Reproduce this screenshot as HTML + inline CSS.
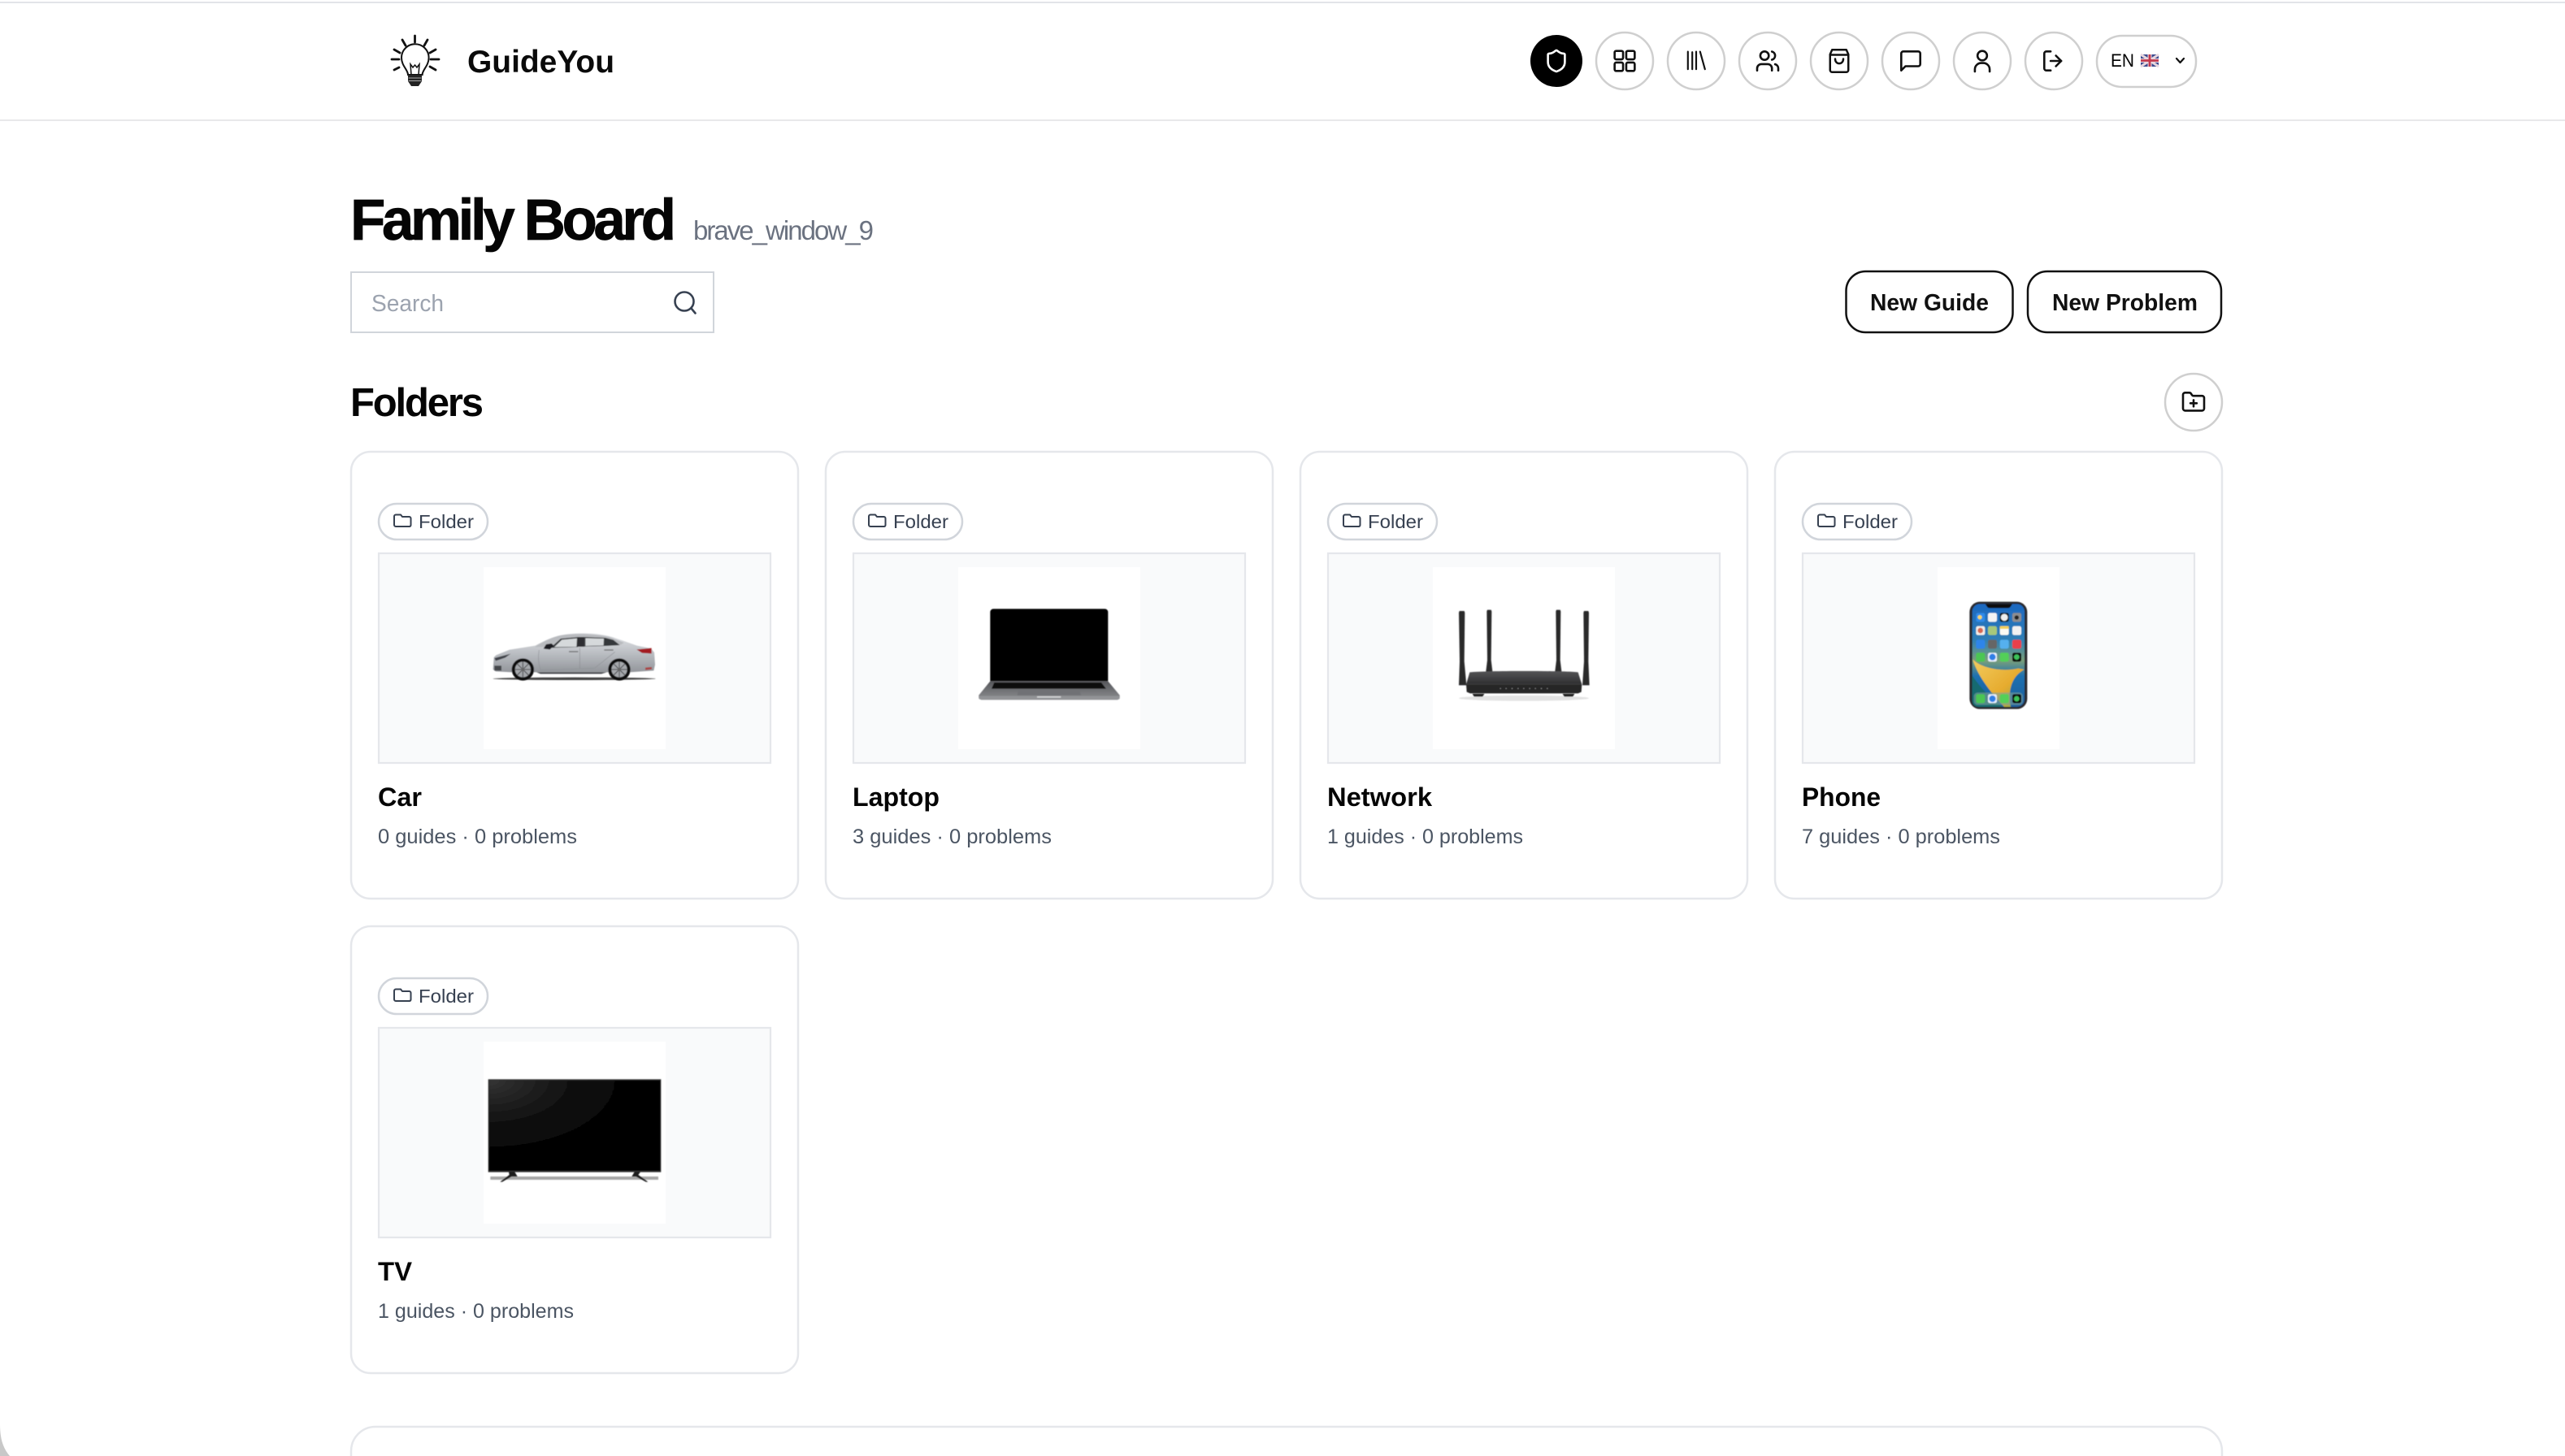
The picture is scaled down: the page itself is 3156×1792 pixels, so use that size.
<!DOCTYPE html>
<html lang="en">
<head>
<meta charset="utf-8">
<title>GuideYou - Family Board</title>
<style>
html,body{margin:0;padding:0;background:#fff;width:3156px;height:1792px;overflow:hidden}
svg{display:block;font-family:"Liberation Sans",sans-serif}
.b{font-weight:700}
.ic{fill:none;stroke:#111;stroke-width:2;stroke-linecap:round;stroke-linejoin:round}
.ring{fill:#fff;stroke:#cfcfcf;stroke-width:2.5}
.card{fill:#fff;stroke:#e5e7eb;stroke-width:2.5}
.chip{fill:#fff;stroke:#d1d5db;stroke-width:2.5}
.box{fill:#f9fafb;stroke:#e5e7eb;stroke-width:2.2}
.ct{font-size:32px;font-weight:700;fill:#050505}
.cs{font-size:25px;fill:#4b5563}
.cf{font-size:23px;fill:#374151}
.fi{fill:none;stroke:#374151;stroke-width:2;stroke-linecap:round;stroke-linejoin:round}
</style>
</head>
<body>
<svg width="3156" height="1792" viewBox="0 0 3156 1792" xmlns="http://www.w3.org/2000/svg">
<defs>
<filter id="s" x="-5%" y="-5%" width="110%" height="110%"><feGaussianBlur stdDeviation="1.2"/></filter>
<linearGradient id="carb" x1="0" y1="0" x2="0" y2="1"><stop offset="0" stop-color="#e2e4e7"/><stop offset=".5" stop-color="#bcbfc4"/><stop offset="1" stop-color="#93969b"/></linearGradient>
<radialGradient id="tvg" cx="0" cy="0" r=".9"><stop offset="0" stop-color="#343434"/><stop offset=".5" stop-color="#121212"/><stop offset="1" stop-color="#000"/></radialGradient>
<linearGradient id="rtop" x1="0" y1="0" x2="0" y2="1"><stop offset="0" stop-color="#555557"/><stop offset="1" stop-color="#2e2e30"/></linearGradient>
<linearGradient id="lapb" x1="0" y1="0" x2="0" y2="1"><stop offset="0" stop-color="#55565a"/><stop offset="1" stop-color="#8c8d90"/></linearGradient>
<linearGradient id="wall" x1="0" y1="0" x2="0" y2="1"><stop offset="0" stop-color="#1c68c0"/><stop offset=".35" stop-color="#2f7fb5"/><stop offset=".55" stop-color="#7a9f7a"/><stop offset=".7" stop-color="#1d70b0"/><stop offset="1" stop-color="#1b5e9c"/></linearGradient>
<linearGradient id="sw" x1="0" y1="0" x2="1" y2="1"><stop offset="0" stop-color="#f2cb5e"/><stop offset=".6" stop-color="#e6ab2e"/><stop offset="1" stop-color="#7fa750"/></linearGradient>
</defs>

<rect width="3156" height="1792" fill="#fff"/>
<rect x="0" y="2" width="3156" height="2" fill="#e2e4e8"/>
<rect x="0" y="147" width="3156" height="2" fill="#e8e8ea"/>

<!-- logo -->
<g fill="none" stroke="#111" stroke-linecap="round">
<path d="M510.500 44v8M495 49l4 7M526 49l-4 7M485 61l7 4M536 61l-7 4M482 73h9M530 73h10M485 86l6-3M536 86l-7-4" stroke-width="2.800"/>
<path d="M502 92c0-6-8-11-8-21a16.800 16.800 0 0 1 33.600 0c0 10-8 15-8 21z" stroke-width="2"/>
<path d="M506 92l-1-13 3 4 2.500-3 2.500 3 3-4-1 13" stroke-width="1.500"/>
<path d="M502 92h17v8l-4 6h-9l-4-6z" fill="#222" stroke="none"/>
<path d="M503 96h15M503 99.500h15" stroke="#aaa" stroke-width="1"/>
</g>
<text x="575" y="89" class="b" font-size="39" fill="#0a0a0a" textLength="181" lengthAdjust="spacingAndGlyphs">GuideYou</text>

<!-- nav -->
<circle cx="1915" cy="75" r="32" fill="#000"/>
<g transform="translate(1915 75) scale(1.3) translate(-12 -12)"><path class="ic" style="stroke:#fff" d="M20 13c0 5-3.500 7.500-7.660 8.950a1 1 0 0 1-.67-.01C7.500 20.500 4 18 4 13V6a1 1 0 0 1 1-1c2 0 4.500-1.200 6.240-2.720a1.170 1.170 0 0 1 1.520 0C14.510 3.810 17 5 19 5a1 1 0 0 1 1 1z"/></g>

<circle class="ring" cx="1999" cy="75" r="35"/>
<g transform="translate(1999 75) scale(1.3) translate(-12 -12)" class="ic"><rect x="2.500" y="2.500" width="8" height="8" rx="1.500"/><rect x="13.500" y="2.500" width="8" height="8" rx="1.500"/><rect x="2.500" y="13.500" width="8" height="8" rx="1.500"/><rect x="13.500" y="13.500" width="8" height="8" rx="1.500"/></g>

<circle class="ring" cx="2087" cy="75" r="35"/>
<g transform="translate(2087 75) scale(1.2) translate(-12 -12)" class="ic"><path d="m16 2.500 5 18M12 2.500v18M8 3v17.500M3.500 2.500v18" stroke-width="1.800"/></g>

<circle class="ring" cx="2175" cy="75" r="35"/>
<g transform="translate(2175 75) scale(1.3) translate(-12 -12)" class="ic"><path d="M16 21v-2a4 4 0 0 0-4-4H6a4 4 0 0 0-4 4v2"/><circle cx="9" cy="7" r="4"/><path d="M22 21v-2a4 4 0 0 0-3-3.870"/><path d="M16 3.130a4 4 0 0 1 0 7.750"/></g>

<circle class="ring" cx="2263" cy="75" r="35"/>
<g transform="translate(2263 75) scale(1.25) translate(-12 -12)" class="ic"><path d="M3 5.500l2-4.500h14l2 4.500V21a2 2 0 0 1-2 2H5a2 2 0 0 1-2-2z"/><path d="M3 6h18M8 10c0 6 8 6 8 0"/></g>

<circle class="ring" cx="2351" cy="75" r="35"/>
<g transform="translate(2351 75) scale(1.3) translate(-12 -12)" class="ic"><path d="M21 15a2 2 0 0 1-2 2H7l-4 4V5a2 2 0 0 1 2-2h14a2 2 0 0 1 2 2z"/></g>

<circle class="ring" cx="2439" cy="75" r="35"/>
<g transform="translate(2439 75) scale(1.3) translate(-12 -12)" class="ic"><circle cx="12" cy="7" r="4.500"/><path d="M5 22v-2a6 6 0 0 1 6-6h2a6 6 0 0 1 6 6v2"/></g>

<circle class="ring" cx="2527" cy="75" r="35"/>
<g transform="translate(2527 75) scale(1.3) translate(-12 -12)" class="ic"><path d="M9 21H5a2 2 0 0 1-2-2V5a2 2 0 0 1 2-2h4"/><path d="m14 17 5-5-5-5"/><path d="M19 12H9"/></g>

<rect class="ring" x="2580" y="44" width="122" height="63" rx="31"/>
<text x="2597" y="82" font-size="22" fill="#000" textLength="29" lengthAdjust="spacingAndGlyphs">EN</text>
<g>
<rect x="2634" y="67" width="22" height="15" rx="1.500" fill="#3b4a8f"/>
<path d="M2634 67l22 15M2656 67l-22 15" stroke="#e8d6de" stroke-width="3"/>
<path d="M2645 67v15M2634 74.500h22" stroke="#e8d6de" stroke-width="5"/>
<path d="M2645 67v15M2634 74.500h22" stroke="#c23a4f" stroke-width="2.800"/>
</g>
<path d="M2678 72l4.500 5 4.500-5" fill="none" stroke="#111" stroke-width="2.200" stroke-linecap="round" stroke-linejoin="round"/>

<!-- heading -->
<text x="431" y="295" class="b" font-size="71" fill="#050505" stroke="#050505" stroke-width=".7" textLength="401" lengthAdjust="spacing">Family Board</text>
<text x="853" y="295" font-size="33" fill="#6b7280" textLength="222" lengthAdjust="spacing">brave_window_9</text>

<!-- search -->
<rect x="432" y="335" width="446" height="74" fill="#fff" stroke="#d1d5db" stroke-width="2"/>
<text x="457" y="383" font-size="29" fill="#9ca3af" textLength="89" lengthAdjust="spacingAndGlyphs">Search</text>
<g fill="none" stroke="#374151" stroke-width="2.600" stroke-linecap="round"><circle cx="842" cy="371" r="11.500"/><path d="M850.500 379.500l5 6"/></g>

<!-- buttons -->
<rect x="2271.500" y="334" width="205" height="75" rx="24" fill="#fff" stroke="#111" stroke-width="2.500"/>
<text x="2301" y="382" class="b" font-size="29" fill="#111" textLength="146" lengthAdjust="spacingAndGlyphs">New Guide</text>
<rect x="2495" y="334" width="238" height="75" rx="24" fill="#fff" stroke="#111" stroke-width="2.500"/>
<text x="2525" y="382" class="b" font-size="29" fill="#111" textLength="179" lengthAdjust="spacingAndGlyphs">New Problem</text>

<text x="431" y="512" class="b" font-size="49" fill="#050505" textLength="164" lengthAdjust="spacing">Folders</text>
<circle class="ring" cx="2699" cy="495" r="35"/>
<g transform="translate(2699 495) scale(1.3) translate(-12 -12)" class="ic"><path d="M12 10v6"/><path d="M9 13h6"/><path d="M20 20a2 2 0 0 0 2-2V8a2 2 0 0 0-2-2h-7.900a2 2 0 0 1-1.690-.9L9.600 3.900A2 2 0 0 0 7.930 3H4a2 2 0 0 0-2 2v13a2 2 0 0 0 2 2Z"/></g>

<!-- cards row 1 -->
<rect class="card" x="432" y="556" width="550" height="550" rx="24"/>
<rect class="card" x="1016" y="556" width="550" height="550" rx="24"/>
<rect class="card" x="1600" y="556" width="550" height="550" rx="24"/>
<rect class="card" x="2184" y="556" width="550" height="550" rx="24"/>
<!-- cards row 2 -->
<rect class="card" x="432" y="1140" width="550" height="550" rx="24"/>
<!-- bottom card -->
<rect class="card" x="432" y="1756" width="2302" height="120" rx="30"/>

<!-- chips -->
<g>
<rect class="chip" x="466" y="620" width="134" height="44" rx="22"/>
<path class="fi" transform="translate(-1 1)" d="M505 647a2 2 0 0 0 1.500-2v-8a2 2 0 0 0-2-2h-8.500l-2-2.500h-6a2 2 0 0 0-2 2v10.500a2 2 0 0 0 2 2z"/>
<text x="515" y="650" class="cf" textLength="68" lengthAdjust="spacingAndGlyphs">Folder</text>

<rect class="chip" x="1050" y="620" width="134" height="44" rx="22"/>
<path class="fi" transform="translate(-1 1)" d="M1089 647a2 2 0 0 0 1.500-2v-8a2 2 0 0 0-2-2h-8.500l-2-2.500h-6a2 2 0 0 0-2 2v10.500a2 2 0 0 0 2 2z"/>
<text x="1099" y="650" class="cf" textLength="68" lengthAdjust="spacingAndGlyphs">Folder</text>

<rect class="chip" x="1634" y="620" width="134" height="44" rx="22"/>
<path class="fi" transform="translate(-1 1)" d="M1673 647a2 2 0 0 0 1.500-2v-8a2 2 0 0 0-2-2h-8.500l-2-2.500h-6a2 2 0 0 0-2 2v10.500a2 2 0 0 0 2 2z"/>
<text x="1683" y="650" class="cf" textLength="68" lengthAdjust="spacingAndGlyphs">Folder</text>

<rect class="chip" x="2218" y="620" width="134" height="44" rx="22"/>
<path class="fi" transform="translate(-1 1)" d="M2257 647a2 2 0 0 0 1.500-2v-8a2 2 0 0 0-2-2h-8.500l-2-2.500h-6a2 2 0 0 0-2 2v10.500a2 2 0 0 0 2 2z"/>
<text x="2267" y="650" class="cf" textLength="68" lengthAdjust="spacingAndGlyphs">Folder</text>

<rect class="chip" x="466" y="1204" width="134" height="44" rx="22"/>
<path class="fi" transform="translate(-1 1)" d="M505 1231a2 2 0 0 0 1.500-2v-8a2 2 0 0 0-2-2h-8.500l-2-2.500h-6a2 2 0 0 0-2 2v10.500a2 2 0 0 0 2 2z"/>
<text x="515" y="1234" class="cf" textLength="68" lengthAdjust="spacingAndGlyphs">Folder</text>
</g>

<!-- image boxes -->
<rect class="box" x="466" y="681" width="482" height="258"/>
<rect class="box" x="1050" y="681" width="482" height="258"/>
<rect class="box" x="1634" y="681" width="482" height="258"/>
<rect class="box" x="2218" y="681" width="482" height="258"/>
<rect class="box" x="466" y="1265" width="482" height="258"/>

<rect x="595" y="698" width="224" height="224" fill="#fff"/>
<rect x="1179" y="698" width="224" height="224" fill="#fff"/>
<rect x="1763" y="698" width="224" height="224" fill="#fff"/>
<rect x="2384" y="698" width="150" height="224" fill="#fff"/>
<rect x="595" y="1282" width="224" height="224" fill="#fff"/>

<!-- car -->
<g transform="translate(590 750) scale(.33333)">
<g filter="url(#s)">
<ellipse cx="350" cy="256" rx="300" ry="5" fill="#444"/>
<path d="M50 222l3-45 8-8 50-20 95-15c30-18 70-35 100-40 60-10 130-8 185 8l90 32 52 10 12 15 3 45-5 22-90 6H120l-60-3z" fill="url(#carb)"/>
<path d="M205 138c32-20 68-38 95-42 55-9 120-7 178 5l55 22-12 8-310 8z" fill="#b9bbbf"/>
<path d="M262 142l38-34 66-6-3 37z" fill="#36373a"/>
<path d="M276 139l28-27 56-5-2 31z" fill="#d6d9db"/>
<path d="M388 102l76 3 30 8 24 19-56 3-74 2z" fill="#36373a"/>
<path d="M391 106l68 2-1 25-67 2z" fill="#d6d9db"/>
<path d="M362 102h26v36h-26z" fill="#2e2f32"/>
<path d="M236 145l10-16 20-3 8 8-14 14z" fill="#1d1e20"/>
<path d="M580 148l55-5v20l-35-2z" fill="#a31c22"/>
<path d="M55 180l60-16-20 14-35 12z" fill="#3f4249"/>
<path d="M55 208h26v18H55z" fill="#45474c"/>
<path d="M220 150c-4 22-3 50 5 74l200-7 75-60" fill="none" stroke="#8f9297" stroke-width="2"/>
<path d="M370 142v76" stroke="#888b90" stroke-width="2"/>
<path d="M330 156h34M460 150h34" stroke="#666" stroke-width="4"/>
<path d="M612 215l24-2v8l-24 3z" fill="#a44"/>
<path d="M210 232h260l-20 6H225z" fill="#45474c"/>
<circle cx="160" cy="222" r="41" fill="#0f0f10"/><circle cx="160" cy="222" r="29" fill="#a4a7ab"/>
<path d="M160 194v56M132 222h56M140 202l40 40M180 202l-40 40" stroke="#3c3d41" stroke-width="3"/>
<circle cx="160" cy="222" r="6" fill="#666"/>
<circle cx="516" cy="222" r="41" fill="#0f0f10"/><circle cx="516" cy="222" r="29" fill="#a4a7ab"/>
<path d="M516 194v56M488 222h56M496 202l40 40M536 202l-40 40" stroke="#3c3d41" stroke-width="3"/>
<circle cx="516" cy="222" r="6" fill="#666"/>
</g>
</g>

<!-- laptop -->
<g transform="translate(1150 680) scale(.33333)">
<g filter="url(#s)">
<path d="M205 475V220a12 12 0 0 1 12-12h411a12 12 0 0 1 12 12v255z" fill="#050505"/>
<path d="M205 475h435l43 52v8l-8 8H172l-9-8v-8z" fill="url(#lapb)"/>
<path d="M220 480h395l18 23H210z" fill="#111"/>
<path d="M163 530h520v10l-8 4H172l-9-4z" fill="#929396"/>
<path d="M378 531h88v5h-88z" fill="#d8d9da"/>
<path d="M310 505h225l5 22H305z" fill="#707175"/>
</g>
</g>

<!-- router -->
<g transform="translate(1740 680) scale(.33333)">
<g filter="url(#s)">
<ellipse cx="405" cy="538" rx="240" ry="10" fill="#e2e2e2"/>
<path d="M165 222l2-6h18l2 6-2 180 8 88h-28l3-88z" fill="#2a2a2c"/>
<path d="M268 217l2-5h14l2 5-2 180 6 50h-26l6-50z" fill="#2a2a2c"/>
<path d="M523 217l2-5h14l2 5-2 180 6 50h-26l6-50z" fill="#2a2a2c"/>
<path d="M625 222l2-6h16l2 6-2 180 4 88h-26l6-88z" fill="#2a2a2c"/>
<path d="M205 442c60-6 340-6 400 0l14 45H192z" fill="url(#rtop)"/>
<path d="M192 487h427l-2 28-12 5H207l-13-5z" fill="#252527"/>
<path d="M215 522h44l-6 10h-32zM548 522h44l-6 10h-32z" fill="#1a1a1a"/>
<path d="M317 502h3M338 502h3M360 502h3M382 502h3M403 502h3M425 502h3M446 502h3M468 502h3M490 502h3" stroke="#aaa" stroke-width="3"/>
</g>
</g>

<!-- phone -->
<g transform="translate(2370 700) scale(.33333)">
<g filter="url(#s)">
<rect x="160" y="122" width="213" height="396" rx="38" fill="#2a2b2e"/>
<rect x="170" y="130" width="193" height="380" rx="28" fill="url(#wall)"/>
<path d="M172 335C210 372 290 380 340 368L362 372C320 395 300 440 312 510H288C250 470 190 400 172 335Z" fill="url(#sw)"/>
<path d="M170 395C200 440 240 480 282 510H195Q170 510 170 485Z" fill="#136a70"/>
<path d="M218 130h100l-8 12c-2 2-4 3-8 3h-68c-4 0-6-1-8-3z" fill="#111"/>
<rect x="184" y="163" width="33" height="33" rx="7" fill="#2d8ae8"/><circle cx="198" cy="179" r="8" fill="#f6d768"/><rect x="228" y="163" width="33" height="33" rx="7" fill="#f4f4f4"/><rect x="272" y="163" width="33" height="33" rx="7" fill="#111"/><circle cx="288.500" cy="179.500" r="13" fill="#eee"/><rect x="318" y="163" width="33" height="33" rx="7" fill="#8d8d8f"/><circle cx="334" cy="180" r="8" fill="#222"/>
<rect x="184" y="212" width="33" height="33" rx="7" fill="#f3efe8"/><circle cx="200" cy="228" r="10" fill="#d7664f"/><rect x="228" y="212" width="33" height="33" rx="7" fill="#a6c87a"/><rect x="272" y="212" width="33" height="33" rx="7" fill="#fbfaf3"/><rect x="272" y="212" width="33" height="10" fill="#f3cf54"/><rect x="318" y="212" width="33" height="33" rx="7" fill="#f2f2f2"/>
<rect x="184" y="262" width="33" height="33" rx="7" fill="#2f85ea"/><rect x="228" y="262" width="33" height="33" rx="7" fill="#666"/><rect x="272" y="262" width="33" height="33" rx="7" fill="#55b0ee"/><rect x="318" y="262" width="33" height="33" rx="7" fill="#ea3f4c"/>
<rect x="184" y="310" width="33" height="33" rx="7" fill="#4bc652"/><rect x="228" y="310" width="33" height="33" rx="7" fill="#e6eefc"/><circle cx="244.500" cy="326" r="12" fill="#2f7fe6"/><rect x="272" y="310" width="33" height="33" rx="7" fill="#53cf58"/><rect x="318" y="310" width="33" height="33" rx="7" fill="#0c0c0c"/><circle cx="334" cy="326" r="10" fill="#3ec25a"/>
<rect x="176" y="457" width="181" height="46" rx="14" fill="#7da09a" opacity=".6"/>
<rect x="184" y="463" width="33" height="33" rx="7" fill="#4bc652"/><rect x="228" y="463" width="33" height="33" rx="7" fill="#e6eefc"/><circle cx="244.500" cy="480" r="12" fill="#2f7fe6"/><rect x="272" y="463" width="33" height="33" rx="7" fill="#53cf58"/><rect x="318" y="463" width="33" height="33" rx="7" fill="#0c0c0c"/><circle cx="334" cy="480" r="10" fill="#3ec25a"/>
</g>
</g>

<!-- tv -->
<g transform="translate(560 1270) scale(.33333)">
<g filter="url(#s)">
<rect x="130" y="534" width="620" height="12" fill="#808080" opacity=".7"/>
<rect x="122" y="175" width="638" height="343" fill="#333"/>
<rect x="125" y="179" width="632" height="334" fill="url(#tvg)"/>
<path d="M198 517h22l10 17-22 0 -34 20h-8l34-26zM652 534l10-17h22l-8 11 36 26h-8l-36-20z" fill="#1c1c1e"/>
</g>
</g>

<!-- card text -->
<text x="465" y="992" class="ct" textLength="54" lengthAdjust="spacingAndGlyphs">Car</text>
<text x="465" y="1038" class="cs" textLength="245" lengthAdjust="spacingAndGlyphs">0 guides · 0 problems</text>
<text x="1049" y="992" class="ct" textLength="107" lengthAdjust="spacingAndGlyphs">Laptop</text>
<text x="1049" y="1038" class="cs" textLength="245" lengthAdjust="spacingAndGlyphs">3 guides · 0 problems</text>
<text x="1633" y="992" class="ct" textLength="129" lengthAdjust="spacingAndGlyphs">Network</text>
<text x="1633" y="1038" class="cs" textLength="241" lengthAdjust="spacingAndGlyphs">1 guides · 0 problems</text>
<text x="2217" y="992" class="ct" textLength="97" lengthAdjust="spacingAndGlyphs">Phone</text>
<text x="2217" y="1038" class="cs" textLength="244" lengthAdjust="spacingAndGlyphs">7 guides · 0 problems</text>
<text x="465" y="1576" class="ct" textLength="42" lengthAdjust="spacingAndGlyphs">TV</text>
<text x="465" y="1622" class="cs" textLength="241" lengthAdjust="spacingAndGlyphs">1 guides · 0 problems</text>

<!-- window corner -->
<path d="M0 1753c0 18 4 30 12 39H0z" fill="#c8c8c8"/>
</svg>
</body>
</html>
